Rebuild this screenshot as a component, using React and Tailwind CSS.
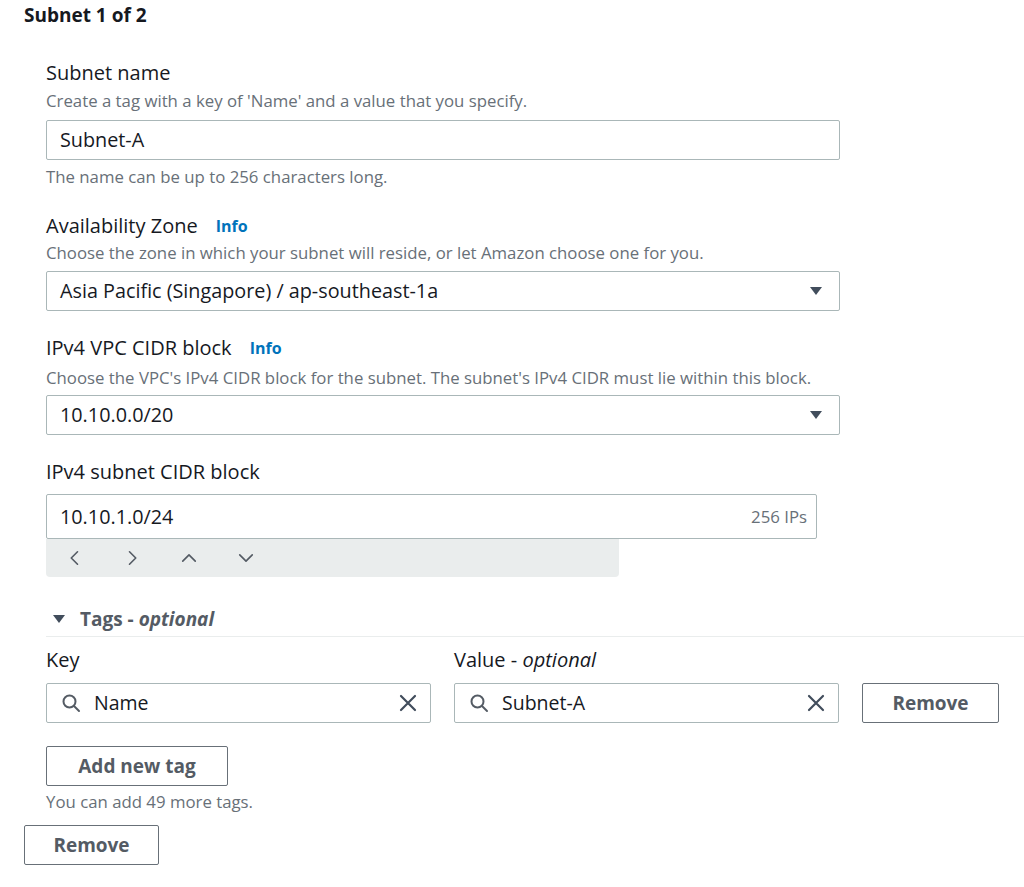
import React from 'react';

const font = { fontFamily: '"Open Sans", "Liberation Sans", sans-serif' };

const Caret = () => (
  <svg width="14" height="10" viewBox="0 0 14 10" className="text-[#414d5c]">
    <path d="M1 1h12L7 9z" fill="currentColor" />
  </svg>
);

const Chevron = ({ d }) => (
  <svg width="20" height="20" viewBox="0 0 16 16" fill="none" stroke="#545b64" strokeWidth="1.3" strokeLinecap="round" strokeLinejoin="round">
    <path d={d} />
  </svg>
);

const SearchIcon = () => (
  <svg width="20" height="20" viewBox="0 0 20 20" fill="none" stroke="#545b64" strokeWidth="2" strokeLinecap="round">
    <circle cx="8.5" cy="8.5" r="6" />
    <path d="M13 13l5 5" />
  </svg>
);

const ClearIcon = () => (
  <svg width="20" height="20" viewBox="0 0 20 20" fill="none" stroke="#414d5c" strokeWidth="2.2" strokeLinecap="round">
    <path d="M3 3l14 14M17 3L3 17" />
  </svg>
);

const Label = ({ children, info }) => (
  <div className="flex items-center text-[20px] leading-[24px] text-[#16191f]">
    {children}
    {info && <span className="ml-[18px] text-[16px] font-bold text-[#0073bb]">Info</span>}
  </div>
);

const Desc = ({ children, className = '' }) => (
  <div className={`text-[16.8px] leading-[20px] text-[#687078] ${className}`}>{children}</div>
);

const Select = ({ value, className = '' }) => (
  <div className={`flex h-[40px] w-[794px] items-center justify-between rounded-[2px] border border-[#aab7b8] pl-[13px] pr-[16px] text-[19.8px] text-[#16191f] ${className}`}>
    <span>{value}</span>
    <Caret />
  </div>
);

const TagInput = ({ value }) => (
  <div className="flex h-[40px] w-[385px] items-center rounded-[2px] border border-[#aab7b8] pl-[14px] pr-[12px] text-[19.5px] text-[#16191f]">
    <SearchIcon />
    <span className="ml-[13px] flex-1">{value}</span>
    <ClearIcon />
  </div>
);

const Button = ({ children, className = '' }) => (
  <button className={`flex h-[40px] items-center justify-center rounded-[2px] border border-[#687078] bg-white text-[19px] font-bold text-[#545b64] ${className}`}>
    {children}
  </button>
);

export default function App() {
  return (
    <div className="min-h-screen bg-white px-[24px] pt-[3px]" style={font}>
      <h2 className="text-[19px] font-bold leading-[24px] text-[#16191f]">Subnet 1 of 2</h2>

      <div className="ml-[22px] mt-[34px]">
        <Label>Subnet name</Label>
        <Desc className="mt-[6px]">Create a tag with a key of 'Name' and a value that you specify.</Desc>
        <div className="mt-[9px] flex h-[40px] w-[794px] items-center rounded-[2px] border border-[#aab7b8] px-[13px] text-[19.8px] text-[#16191f]">
          Subnet-A
        </div>
        <Desc className="mt-[7px]">The name can be up to 256 characters long.</Desc>

        <div className="mt-[27px]">
          <Label info>Availability Zone</Label>
        </div>
        <Desc className="mt-[5px]">Choose the zone in which your subnet will reside, or let Amazon choose one for you.</Desc>
        <Select className="mt-[8px]" value="Asia Pacific (Singapore) / ap-southeast-1a" />

        <div className="mt-[25px]">
          <Label info>IPv4 VPC CIDR block</Label>
        </div>
        <Desc className="mt-[8px]">Choose the VPC's IPv4 CIDR block for the subnet. The subnet's IPv4 CIDR must lie within this block.</Desc>
        <Select className="mt-[7px]" value="10.10.0.0/20" />

        <div className="mt-[25px]">
          <Label>IPv4 subnet CIDR block</Label>
        </div>
        <div className="mt-[10px] flex h-[45px] w-[771px] items-center justify-between rounded-[2px] border border-[#aab7b8] pl-[13px] pr-[9px]">
          <span className="text-[19.8px] text-[#16191f]">10.10.1.0/24</span>
          <span className="text-[16.8px] text-[#687078]">256 IPs</span>
        </div>
        <div className="flex h-[38px] w-[573px] items-center gap-[37px] rounded-b-[4px] bg-[#eaeded] pl-[19px]">
          <Chevron d="M10 3L5 8l5 5" />
          <Chevron d="M6 3l5 5-5 5" />
          <Chevron d="M3 10.5l5-5 5 5" />
          <Chevron d="M3 5.5l5 5 5-5" />
        </div>

        <div className="mt-[30px] flex items-center border-b border-[#eaeded] pb-[5px] pl-[6px] mr-[-24px]">
          <Caret />
          <span className="ml-[14px] text-[19px] font-bold leading-[24px] text-[#545b64]">
            Tags - <em className="italic">optional</em>
          </span>
        </div>

        <div className="mt-[11px] flex gap-[23px]">
          <div>
            <div className="text-[20px] leading-[24px] text-[#16191f]">Key</div>
            <div className="mt-[11px]">
              <TagInput value="Name" />
            </div>
          </div>
          <div>
            <div className="text-[20px] leading-[24px] text-[#16191f]">
              Value - <em className="italic">optional</em>
            </div>
            <div className="mt-[11px] flex gap-[22px]">
              <div className="w-[386px]">
                <TagInput value="Subnet-A" />
              </div>
              <Button className="w-[137px]">Remove</Button>
            </div>
          </div>
        </div>

        <Button className="mt-[23px] w-[182px]">Add new tag</Button>
        <Desc className="mt-[6px]">You can add 49 more tags.</Desc>
      </div>

      <Button className="mt-[13px] w-[135px]">Remove</Button>
    </div>
  );
}
